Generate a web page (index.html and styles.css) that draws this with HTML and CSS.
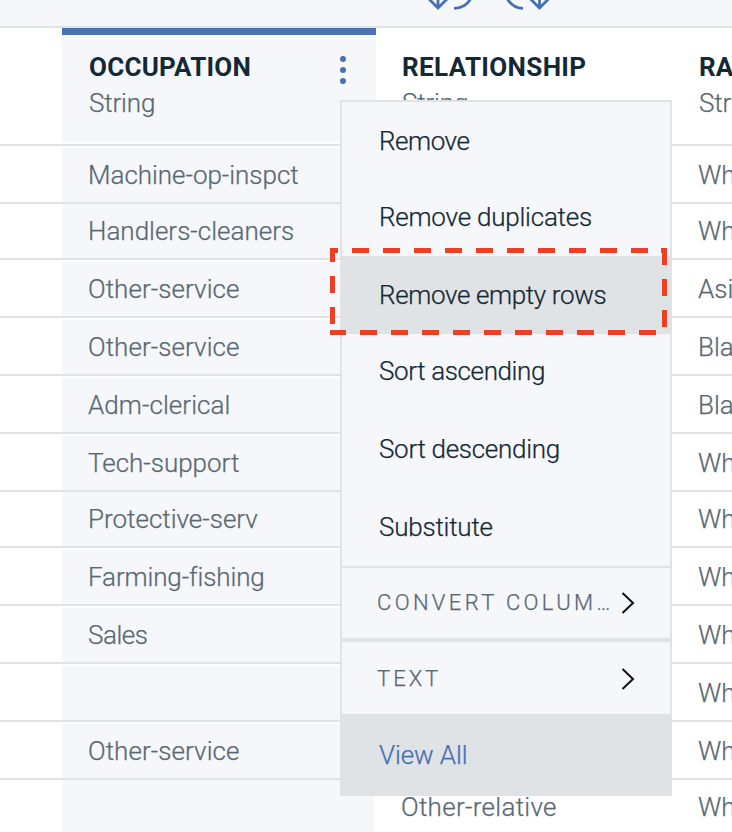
FILE: index.html
```html
<!DOCTYPE html>
<html lang="en">
<head>
<meta charset="utf-8">
<title>Data table</title>
<link rel="stylesheet" href="styles.css">
</head>
<body>
<div class="app">
  <header class="toolbar">
    <svg class="tools" width="120" height="26" viewBox="425 0 120 26">
      <path d="M438 -12V8M428.500 -1.500L438 8L447.500 -1.500M454 8.300C461 8.300 467 5 470.500 -1"/>
      <path d="M539.500 -12V8M530 -1.500L539.500 8L549 -1.500M523 8.300C516.500 8.300 511 5 507.500 -1"/>
    </svg>
  </header>
  <div class="head">
    <div class="gutter"></div>
    <div class="col-head selected">
      <div><div class="name n1">OCCUPATION</div><div class="type">String</div></div>
      <svg class="dots" width="6" height="28" viewBox="0 0 6 28"><circle cx="3" cy="2.900" r="3"/><circle cx="3" cy="14" r="3"/><circle cx="3" cy="25.100" r="3"/></svg>
    </div>
    <div class="col-head rel"><div class="name n2">RELATIONSHIP</div><div class="type">String</div></div>
    <div class="col-head race"><div class="name">RACE</div><div class="type">String</div></div>
  </div>
  <div class="row"><span class="occ t1">Machine-op-inspct</span><span class="rl"></span><span class="rc">White</span></div>
  <div class="row short"><span class="occ t2">Handlers-cleaners</span><span class="rl"></span><span class="rc">White</span></div>
  <div class="row"><span class="occ">Other-service</span><span class="rl"></span><span class="rc">Asian</span></div>
  <div class="row"><span class="occ">Other-service</span><span class="rl"></span><span class="rc">Black</span></div>
  <div class="row"><span class="occ">Adm-clerical</span><span class="rl"></span><span class="rc">Black</span></div>
  <div class="row"><span class="occ t4">Tech-support</span><span class="rl"></span><span class="rc">White</span></div>
  <div class="row short"><span class="occ t5">Protective-serv</span><span class="rl"></span><span class="rc">White</span></div>
  <div class="row"><span class="occ t6">Farming-fishing</span><span class="rl"></span><span class="rc">White</span></div>
  <div class="row"><span class="occ t7">Sales</span><span class="rl"></span><span class="rc">White</span></div>
  <div class="row"><span class="occ"></span><span class="rl"></span><span class="rc">White</span></div>
  <div class="row"><span class="occ">Other-service</span><span class="rl"></span><span class="rc">White</span></div>
  <div class="row short"><span class="occ"></span><span class="rl">Other-relative</span><span class="rc">White</span></div>

  <nav class="menu">
    <div class="item tight m1">Remove</div>
    <div class="item m2">Remove duplicates</div>
    <div class="item tight active m3">Remove empty rows</div>
    <div class="item m4">Sort ascending</div>
    <div class="item m5">Sort descending</div>
    <div class="item m6">Substitute</div>
    <div class="group convert"><span class="g1">CONVERT COLUM<span class="dotdot">…</span></span><svg width="14" height="22" viewBox="0 0 14 22"><path d="M1.500 1L12 11L1.500 21"/></svg></div>
    <div class="group text"><span class="g2">TEXT</span><svg width="14" height="22" viewBox="0 0 14 22"><path d="M1.500 1L12 11L1.500 21"/></svg></div>
    <div class="view-all">View All</div>
  </nav>
  <svg class="callout" width="337" height="87" viewBox="0 0 337 87">
    <path d="M0 2.500H8M331 2.500H337M2.500 0V14M0 84.500H16"/>
    <path class="dash" d="M22 2.500H318M30 84.500H326M2.500 28V76M334.500 0V79"/>
  </svg>
</div>
</body>
</html>
```
FILE: styles.css
```css
* { box-sizing: border-box; }
body {
  margin: 0;
  background: #fff;
  font-family: Roboto, "Liberation Sans", sans-serif;
  font-weight: 300;
  font-size: 26px;
  color: #5a6872;
  -webkit-text-stroke: 0.25px;
}
.app { position: relative; width: 732px; height: 832px; overflow: hidden; white-space: nowrap; }
.toolbar { height: 28px; background: #f5f7fb; border-bottom: 2px solid #dfe3e6; padding-left: 425px; }
.tools { display: block; overflow: visible; fill: none; stroke: #4670b2; stroke-width: 2.8; }
.head { display: flex; height: 118px; border-bottom: 2px solid #dfe3e6; }
.gutter { width: 62px; flex: none; }
.col-head { flex: none; padding-top: 21px; line-height: 36px; }
.selected {
  display: flex;
  justify-content: space-between;
  width: 314px;
  height: 114px;
  padding: 14px 30px 0 27px;
  border-top: 7px solid #4a72b1;
  background: #f5f7fb;
}
.dots { margin-top: 7px; fill: #4a72b1; }
.rel { width: 297px; padding-left: 26px; }
.race { padding-left: 26px; }
.name { font-weight: 700; font-size: 26px; color: #152935; -webkit-text-stroke: 0; }
.n1 { letter-spacing: 0.25px; }
.n2 { letter-spacing: 0.35px; }
.type { letter-spacing: -0.15px; }
.row { display: flex; height: 58px; padding: 2px 0 0 62px; border-bottom: 2px solid #dfe3e6; line-height: 54px; }
.row.short { height: 56px; padding-top: 0; }
.row span { flex: none; height: 54px; }
.row .occ { width: 312px; padding-left: 26px; background: #f5f7fb; letter-spacing: 0.06px; }
.row .rl { width: 298px; padding-left: 27px; letter-spacing: 0.3px; }
.row .rc { padding-left: 26px; }
.row .t1 { letter-spacing: -0.03px; }
.row .t2 { letter-spacing: 0; }
.row .t4 { letter-spacing: -0.02px; }
.row .t5 { letter-spacing: 0; }
.row .t6 { letter-spacing: -0.12px; }
.row .t7 { letter-spacing: -0.45px; }
.menu {
  position: absolute;
  left: 340px;
  top: 100px;
  width: 332px;
  height: 696px;
  border: 2px solid #dfe3e6;
  background: #f5f7fb;
  color: #152935;
}
.item { height: 78px; line-height: 78px; padding-left: 37px; }
.item.tight { height: 76px; }
.item.active { background: #dfe3e6; box-shadow: 0 2px #dfe3e6; margin: 0 -2px; padding-left: 39px; }
.m1 { letter-spacing: -0.45px; }
.m2 { letter-spacing: -0.22px; }
.m3 { letter-spacing: -0.36px; }
.m4 { letter-spacing: -0.38px; }
.m5 { letter-spacing: -0.3px; }
.m6 { letter-spacing: -0.22px; }
.group {
  display: flex;
  justify-content: space-between;
  align-items: center;
  padding: 0 35px;
  border-top: 2px solid #dfe3e6;
  font-size: 22px;
  color: #5a6872;
  letter-spacing: 3px;
}
.group svg { fill: none; stroke: #111; stroke-width: 2; }
.convert { height: 74px; border-bottom: 2px solid #dfe3e6; padding-bottom: 1px; letter-spacing: 3.35px; }
.text { height: 74px; padding-top: 1px; }
.dotdot { letter-spacing: 0; }
.view-all { height: 80px; padding: 2px 0 0 37px; line-height: 78px; background: #dfe3e6; color: #4670b2; letter-spacing: -0.1px; }
.callout { position: absolute; left: 330px; top: 248px; fill: none; stroke: #ee3f24; stroke-width: 5; }
.dash { stroke-dasharray: 17 14; }
```
